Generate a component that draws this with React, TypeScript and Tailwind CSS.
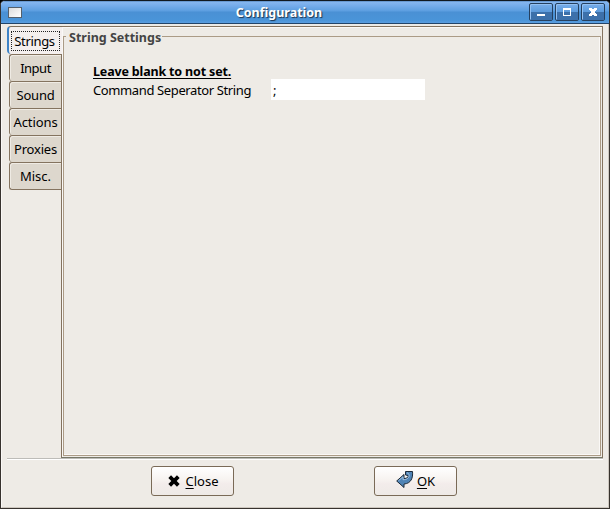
import type { ReactNode } from "react";

const tabs = [
  { label: "Input", tracking: "tracking-[-0.5px]" },
  { label: "Sound", tracking: "tracking-[-0.2px]" },
  { label: "Actions", tracking: "tracking-[-0.1px]" },
  { label: "Proxies", tracking: "tracking-[-0.2px]" },
  { label: "Misc.", tracking: "tracking-[0px]" },
];

function TitleButton({ children }: { children: ReactNode }) {
  return (
    <button className="flex h-[18px] w-6 items-center justify-center rounded-[2px] border border-[#25405f] bg-linear-to-b from-[#78aeea] from-0% via-[#5b9adb] via-50% to-[#4383c4] p-0 shadow-[inset_1px_1px_0_#93c0f2]">
      <svg width="22" height="16" viewBox="0 0 22 16" shapeRendering="crispEdges">
        <rect x="1" y="8" width="21" height="8" fill="#3c70aa" />
        {children}
      </svg>
    </button>
  );
}

function TitleBar() {
  return (
    <header className="grid h-[23px] shrink-0 grid-cols-[1fr_auto_1fr] items-center rounded-t-[4px] border-b border-[#234468] bg-[linear-gradient(#4a7cb4_0px,#86b6ef_1px,#78aeec_4px,#5c9ee0_10px,#4a90d4_11px,#4a94d8_19px,#5a9de0_22px)]">
      <div className="ml-[7px] h-[11px] w-[14px] border border-[#55606c] bg-linear-to-br from-[#dcdcdc] to-[#ffffff]" />
      <h1 className="pt-px pr-[52px] font-['Noto_Sans',sans-serif] text-[12.5px] leading-5 font-bold text-white [text-shadow:1px_1px_1px_#1c334d]">
        Configuration
      </h1>
      <div className="flex justify-end gap-[2px] pr-[4px]">
        <TitleButton>
          <rect x="7" y="10" width="8" height="2" fill="#fff" />
        </TitleButton>
        <TitleButton>
          <path d="M7 4h8v8H7zM8 6v5h6V6z" fill="#fff" fillRule="evenodd" />
        </TitleButton>
        <TitleButton>
          <path d="M7 4h3v1h2V4h3v2h-1v1h-1v2h1v1h1v2h-3v-1h-2v1H7v-2h1V9h1V7H8V6H7z" fill="#fff" />
        </TitleButton>
      </div>
    </header>
  );
}

function SideTabs() {
  return (
    <nav className="z-10 flex w-[54px] shrink-0 flex-col text-center">
      <div className="-mr-px flex h-7 rounded-l-[4px] border-t border-l-2 border-t-[#7d6f5c] border-l-[#3f83c6] bg-[#f4efee] pt-[4px] pl-[2px]">
        <div className="h-[20px] w-[49px] border border-dotted border-[#222] pr-[2px] text-[13px] leading-[19px] tracking-[-0.35px] whitespace-nowrap">
          Strings
        </div>
      </div>
      {tabs.map((tab) => (
        <div
          key={tab.label}
          className="ml-[2px] h-[27px] rounded-l-[3px] border-t border-l border-[#84735f] bg-[#ddd7cd] shadow-[inset_1px_1px_0_#efebe4] last:h-7 last:border-b"
        >
          <div className={`text-[13px] leading-[27px] ${tab.tracking}`}>{tab.label}</div>
        </div>
      ))}
    </nav>
  );
}

function ActionButton({ icon, accessKey, rest }: { icon: ReactNode; accessKey: string; rest: string }) {
  return (
    <button className="flex h-[30px] w-[83px] items-center justify-center rounded-[3px] border border-[#7a6a57] bg-[linear-gradient(#ffffff,#f7f3f0_45%,#f3eceb_60%,#eeeae6)] text-[13px] leading-5">
      {icon}
      <span>
        <span className="underline underline-offset-[2px] [text-decoration-skip-ink:none]">{accessKey}</span>
        {rest}
      </span>
    </button>
  );
}

export default function App() {
  return (
    <div className="h-[509px] w-[610px] bg-black font-['Noto_Sans','Open_Sans',sans-serif] text-black">
      <div className="flex h-full flex-col rounded-t-[5px] border border-[#37322e] border-t-[#101820] bg-[#eeebe6]">
        <TitleBar />
        <main className="flex grow flex-col border border-t-0 border-r-[#cdc7bf] border-b-[#cdc7bf] border-l-[#faf8f6] pt-[2px] pr-[5px] pl-[5px]">
          <div className="flex h-[432px]">
            <SideTabs />
            <section className="flex grow border border-[#84735f] border-b-[#777868] p-px shadow-[inset_1px_1px_0_#faf8f6]">
              <fieldset className="h-[428px] w-full min-w-0 border border-[#ab9b86] pr-0 pl-[2px] shadow-[inset_-1px_-1px_0_#faf8f6]">
                <legend className="pt-[2px] pr-px pl-[3px] text-[12.5px] leading-[15px] font-bold text-[#444]">
                  String Settings
                </legend>
                <div className="pt-[19px] pl-[27px]">
                  <p className="h-[15px] text-[12.5px] leading-4 font-bold tracking-[-0.16px]">
                    <span className="underline underline-offset-[2px] [text-decoration-skip-ink:none]">
                      Leave blank to not set.
                    </span>
                  </p>
                  <label className="flex items-start text-[13px] leading-[21px]">
                    <span className="w-[178px] pt-px tracking-[-0.38px] whitespace-nowrap">
                      Command Seperator String
                    </span>
                    <input
                      className="h-[21px] w-[154px] bg-white px-[2px] pt-[2px] outline-none"
                      defaultValue=";"
                    />
                  </label>
                </div>
              </fieldset>
            </section>
          </div>
          <div className="h-[2px] border-t border-b border-t-[#bdbcb8] border-b-white" />
          <footer className="flex gap-[140px] pt-[6px] pl-[144px]">
            <ActionButton
              accessKey="C"
              rest="lose"
              icon={
                <svg className="mr-[5px]" width="14" height="14" viewBox="0 0 14 14">
                  <path d="M2.700 2.700l8.600 8.600M11.300 2.700l-8.600 8.600" stroke="#000" strokeWidth="3.8" />
                </svg>
              }
            />
            <ActionButton
              accessKey="O"
              rest="K"
              icon={
                <svg className="mr-[3px] mb-[3px]" width="18" height="19" viewBox="0 0 18 19">
                  <path
                    d="M9.500 1.500H16.500C17.200 8 15 13.500 8 14V17.500L0.700 11 8 4.500V8.500C11 8.500 12.500 7.300 12 5.500L9.500 5Z"
                    fill="#4f83b5"
                    stroke="#1d2a38"
                    strokeWidth="1"
                    strokeLinejoin="round"
                  />
                  <path d="M2.500 10.700L7 6.800V9.700C11 9.700 13.500 8 13.200 4.500L11 2.500" fill="none" stroke="#9fc2e2" strokeWidth="1" />
                </svg>
              }
            />
          </footer>
        </main>
      </div>
    </div>
  );
}
